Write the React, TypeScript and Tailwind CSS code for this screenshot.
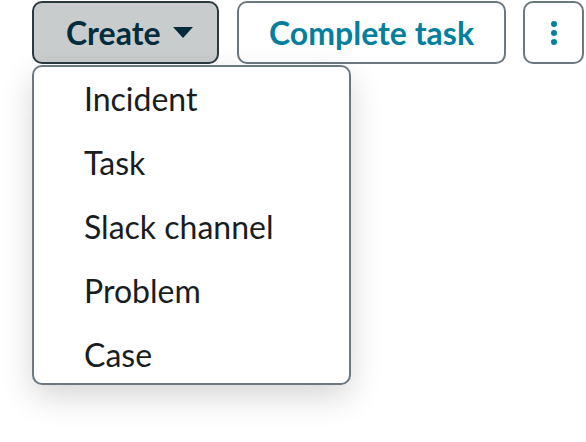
import React from "react";

export default function App() {
  const items = ["Incident", "Task", "Slack channel", "Problem", "Case"];
  return (
    <div className="w-[586px] h-[442px] bg-white overflow-hidden pl-[32px]" style={{ fontFamily: "Lato, 'Noto Sans', sans-serif" }}>
      <div className="flex items-start gap-[18px] pt-[1px] whitespace-nowrap">
        <div className="relative shrink-0">
          <button className="h-[63px] w-[187px] rounded-[10px] border-2 border-[#2b3a41] bg-[#c9cccd] pl-[32px] flex items-center gap-[12px] text-[#032d3c] text-[32px] font-bold leading-none">
            <span>Create</span>
            <svg width="20" height="12" viewBox="0 0 20 12"><path d="M0 0 H20 L10 11 Z" fill="#032d3c" /></svg>
          </button>
          <div className="absolute left-0 top-[64px] w-[319px] h-[320px] overflow-hidden rounded-[10px] border-2 border-[#6c7880] bg-white shadow-[0_12px_32px_rgba(0,0,0,0.16)] z-10">
            {items.map((t) => (
              <div key={t} className="h-[64px] shrink-0 flex items-center pl-[50px] text-[32px] text-[#181d1f] leading-none">
                {t}
              </div>
            ))}
          </div>
        </div>
        <button className="shrink-0 h-[63px] w-[269px] rounded-[10px] border-2 border-[#6c7880] bg-white flex items-center justify-center text-[#04809f] text-[32px] font-bold leading-none">
          Complete task
        </button>
        <button className="shrink-0 h-[63px] w-[61px] -ml-[1px] rounded-[10px] border-2 border-[#6c7880] bg-white flex items-center justify-center">
          <svg width="8" height="26" viewBox="0 0 8 26">
            <circle cx="4" cy="4" r="3" fill="#04809f" />
            <circle cx="4" cy="13" r="3" fill="#04809f" />
            <circle cx="4" cy="22" r="3" fill="#04809f" />
          </svg>
        </button>
      </div>
    </div>
  );
}
